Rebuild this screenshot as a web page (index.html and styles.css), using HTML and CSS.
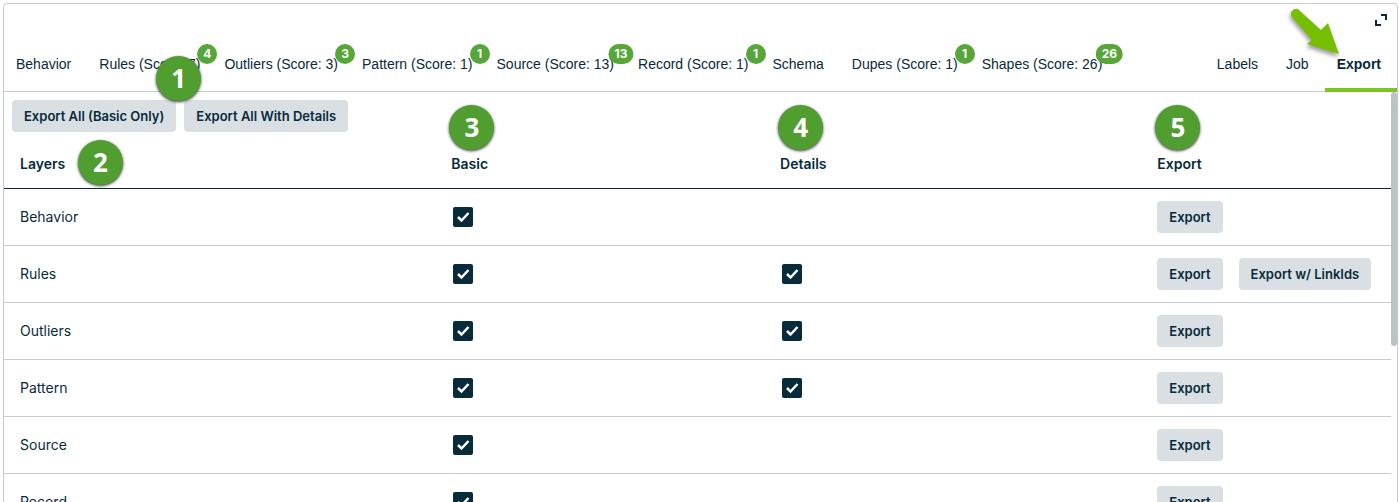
FILE: index.html
```html
<!DOCTYPE html>
<html lang="en">
<head>
    <meta charset="UTF-8">
    <meta name="viewport" content="width=device-width, initial-scale=1.0">
    <title>Export</title>
    <link rel="stylesheet" href="styles.css">
</head>
<body>
    <main class="panel">
        <header class="panel-header">
            <nav class="tabs">
                <a class="tab" href="#behavior">Behavior</a>
                <a class="tab scored" href="#rules">Rules (Score: 7)<span class="badge">4</span><span class="callout callout-rules">1</span></a>
                <a class="tab scored" href="#outliers">Outliers (Score: 3)<span class="badge">3</span></a>
                <a class="tab scored" href="#pattern">Pattern (Score: 1)<span class="badge">1</span></a>
                <a class="tab scored" href="#source">Source (Score: 13)<span class="badge">13</span></a>
                <a class="tab scored" href="#record">Record (Score: 1)<span class="badge">1</span></a>
                <a class="tab" href="#schema">Schema</a>
                <a class="tab scored" href="#dupes">Dupes (Score: 1)<span class="badge">1</span></a>
                <a class="tab scored" href="#shapes">Shapes (Score: 26)<span class="badge">26</span></a>
            </nav>
            <nav class="tabs">
                <a class="tab" href="#labels">Labels</a>
                <a class="tab" href="#job">Job</a>
                <a class="tab active" href="#export">Export</a>
            </nav>
            <button class="expand" aria-label="Expand">
                <svg width="14" height="14" viewBox="0 0 14 14" fill="none" stroke="#072b3b" stroke-width="2">
                    <path d="M7 2h5v5M2 7v5h5"/>
                </svg>
            </button>
            <svg class="arrow" width="60" height="60" viewBox="0 0 60 60">
                <path d="M12 17a5 5 0 0 1 7-7L41 30l7-7 11 31-32-10 5-4z" fill="#76bf00"/>
            </svg>
        </header>

        <section class="panel-body">
            <div class="actions">
                <button class="btn">Export All (Basic Only)</button>
                <button class="btn">Export All With Details</button>
            </div>
            <table class="layers">
                <thead>
                    <tr>
                        <th class="col-layer">Layers<span class="callout callout-layer">2</span></th>
                        <th class="col-basic">Basic<span class="callout">3</span></th>
                        <th class="col-details">Details<span class="callout">4</span></th>
                        <th class="col-export">Export<span class="callout">5</span></th>
                    </tr>
                </thead>
                <tbody>
                    <tr>
                        <td>Behavior</td>
                        <td><input type="checkbox" aria-label="Behavior basic" checked></td>
                        <td></td>
                        <td><div class="buttons"><button class="btn">Export</button></div></td>
                    </tr>
                    <tr>
                        <td>Rules</td>
                        <td><input type="checkbox" aria-label="Rules basic" checked></td>
                        <td><input type="checkbox" aria-label="Rules details" checked></td>
                        <td><div class="buttons"><button class="btn">Export</button><button class="btn">Export w/ LinkIds</button></div></td>
                    </tr>
                    <tr>
                        <td>Outliers</td>
                        <td><input type="checkbox" aria-label="Outliers basic" checked></td>
                        <td><input type="checkbox" aria-label="Outliers details" checked></td>
                        <td><div class="buttons"><button class="btn">Export</button></div></td>
                    </tr>
                    <tr>
                        <td>Pattern</td>
                        <td><input type="checkbox" aria-label="Pattern basic" checked></td>
                        <td><input type="checkbox" aria-label="Pattern details" checked></td>
                        <td><div class="buttons"><button class="btn">Export</button></div></td>
                    </tr>
                    <tr>
                        <td>Source</td>
                        <td><input type="checkbox" aria-label="Source basic" checked></td>
                        <td></td>
                        <td><div class="buttons"><button class="btn">Export</button></div></td>
                    </tr>
                    <tr>
                        <td>Record</td>
                        <td><input type="checkbox" aria-label="Record basic" checked></td>
                        <td></td>
                        <td><div class="buttons"><button class="btn">Export</button></div></td>
                    </tr>
                </tbody>
            </table>
            <div class="scroll-thumb"></div>
        </section>
    </main>
</body>
</html>
```
FILE: styles.css
```css
*{
    box-sizing: border-box;
}
html{
    overflow: hidden;
}
body{
    margin: 0;
    padding: 3px 1px 0 3px;
    height: 100vh;
    overflow: hidden;
    background: #fff;
    color: #072b3b;
    font-family: Inter, 'Liberation Sans', sans-serif;
    font-size: 14px;
    line-height: 20px;
}
.panel{
    border: 1px solid #c4cacf;
    border-radius: 4px;
}
.panel-header{
    position: relative;
    display: flex;
    justify-content: space-between;
    padding-top: 32px;
    border-bottom: 1px solid #c4cacf;
}
.tabs{
    display: flex;
}
.tab{
    position: relative;
    height: 56px;
    padding: 18px 16px 0 12px;
    margin-bottom: -1px;
    color: #072b3b;
    font-family: 'Liberation Sans', Arial, sans-serif;
    white-space: nowrap;
    text-decoration: none;
}
.tab.scored{
    padding-right: 12px;
}
.tab.active{
    font-weight: bold;
    border-bottom: 4px solid #7ac520;
}
.badge{
    position: absolute;
    top: 8px;
    right: 5px;
    min-width: 20px;
    padding: 0 6px;
    border-radius: 10px;
    background: #57a639;
    color: #fff;
    font-family: Inter, sans-serif;
    font-size: 12px;
    font-weight: 700;
    text-align: center;
    transform: translateX(50%);
}
.callout{
    position: absolute;
    top: -35px;
    left: 14px;
    width: 45px;
    height: 45px;
    border-radius: 50%;
    background: #4f9e2f;
    box-shadow: 0 1px 3px rgba(0, 0, 0, .8);
    color: #fff;
    font-family: 'Open Sans', sans-serif;
    font-size: 26px;
    font-weight: 700;
    line-height: 45px;
    text-align: center;
    z-index: 2;
}
.callout-rules{
    top: 20px;
    left: 69px;
}
.callout-layer{
    top: 0;
    left: 74px;
}
.expand{
    position: absolute;
    top: 9px;
    right: 9px;
    display: flex;
    padding: 0;
    border: 0;
    background: none;
    cursor: pointer;
}
.arrow{
    position: absolute;
    top: -4px;
    right: 57px;
    filter: drop-shadow(-1px 3px 2px rgba(0, 0, 0, .4));
}
.panel-body{
    position: relative;
    padding-right: 6px;
}
.actions{
    display: flex;
    gap: 8px;
    padding: 8px;
}
.btn{
    height: 32px;
    padding: 0 12px;
    border: 0;
    border-radius: 4px;
    background: #d9dfe3;
    color: #072b3b;
    font-family: Inter, sans-serif;
    font-size: 13px;
    font-weight: 600;
    white-space: nowrap;
    cursor: pointer;
}
.layers{
    width: 100%;
    table-layout: fixed;
    border-collapse: separate;
    border-spacing: 0;
}
.layers th{
    position: relative;
    height: 49px;
    padding: 0 16px;
    border-bottom: 1px solid #072b3b;
    font-weight: 600;
    text-align: left;
}
.layers td{
    height: 57px;
    padding: 0 16px;
    border-bottom: 1px solid #c4cacf;
}
.col-layer{
    width: 31.1%;
}
.col-basic{
    width: 23.7%;
}
.col-details{
    width: 27.2%;
}
.col-export{
    width: 18%;
}
.buttons{
    display: flex;
    gap: 16px;
}
.layers input{
    appearance: none;
    display: block;
    width: 20px;
    height: 20px;
    margin: 0 2px;
    border-radius: 2px;
    background: #072b3b url("data:image/svg+xml,%3Csvg xmlns='http://www.w3.org/2000/svg' width='20' height='20'%3E%3Cpath d='M5 10l3.500 3.500 7-7.500' fill='none' stroke='white' stroke-width='2.500'/%3E%3C/svg%3E");
}
.scroll-thumb{
    position: absolute;
    top: 0;
    right: 0;
    width: 6px;
    height: 254px;
    border-radius: 3px;
    background: #bac2c6;
}
```
